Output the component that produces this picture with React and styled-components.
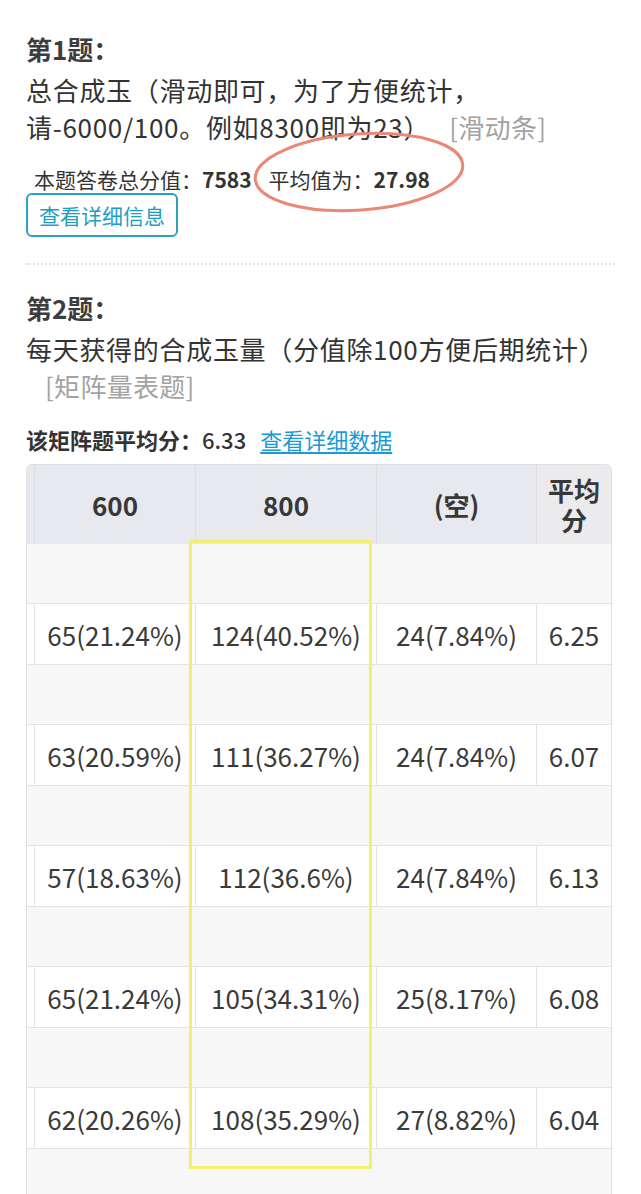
import React from "react";
import styled, { createGlobalStyle } from "styled-components";

const GlobalStyle = createGlobalStyle`
  html, body {
    margin: 0;
    padding: 0;
    background: #fff;
  }
  body {
    font-family: "Noto Sans CJK SC", "Noto Sans", sans-serif;
    color: #333;
  }
`;

const Page = styled.div`
  position: relative;
  box-sizing: border-box;
  width: 641px;
  height: 1194px;
  overflow: hidden;
  padding: 30px 26px 0 26px;
`;

const Question = styled.section`
  padding-bottom: ${p => (p.$last ? 0 : 26)}px;
  margin-bottom: ${p => (p.$last ? 0 : 24)}px;
  border-bottom: ${p => (p.$last ? "none" : "2px dotted #e4e4e4")};
`;

const QTitle = styled.div`
  font-size: 26px;
  line-height: 37px;
  font-weight: 700;
  color: #3d3d3d;
  margin-bottom: 4px;
`;

const QText = styled.div`
  font-size: 26px;
  line-height: 37px;
  letter-spacing: 0.7px;
  color: #333;
`;

const TypeTag = styled.span`
  color: #a3a3a3;
  margin-left: 19px;
  letter-spacing: 0.3px;
`;

const Stats = styled.div`
  margin-top: 20px;
  padding-left: 8px;
  font-size: 21px;
  line-height: 28px;
  color: #333;
`;

const StatValue = styled.b`
  font-weight: 700;
  margin-right: 17px;
`;

const DetailButton = styled.button`
  display: block;
  margin-top: 0;
  box-sizing: border-box;
  height: 44px;
  padding: 0 11px;
  border: 2px solid #2aa3c2;
  border-radius: 6px;
  background: #fff;
  color: #1e9ec1;
  font-family: inherit;
  font-size: 21px;
  line-height: 40px;
`;

const MatrixSummary = styled.div`
  margin-top: 20px;
  font-size: 22px;
  line-height: 30px;
  font-weight: 700;
  color: #333;
`;

const SummaryValue = styled.span`
  font-weight: 500;
  margin-right: 14px;
`;

const DetailLink = styled.a`
  font-weight: 400;
  color: #1b9ad6;
  text-decoration: underline;
  text-underline-offset: 3px;
`;

const Table = styled.div`
  margin-top: 10px;
  width: 586px;
  box-sizing: border-box;
  border: 1px solid #e0e0e0;
  border-bottom: none;
  border-radius: 6px 6px 0 0;
  overflow: hidden;
`;

const columns = "7px 161px 181px 160px 1fr";

const HeadRow = styled.div`
  display: grid;
  grid-template-columns: ${columns};
  height: 79px;
  background: #e7e9ef;
`;

const HeadCell = styled.div`
  display: flex;
  align-items: center;
  justify-content: center;
  text-align: center;
  border-left: ${p => (p.$first ? "none" : "1px solid #dcdee4")};
  background: ${p => (p.$plain ? "#ebebed" : "transparent")};
  padding: 0 ${p => (p.$narrow ? 11 : 0)}px;
  font-size: 26px;
  line-height: 30px;
  font-weight: 700;
  color: #383838;
`;

const BlankRow = styled.div`
  height: 60px;
  box-sizing: border-box;
  background: #f7f7f7;
  border-bottom: 1px solid #e3e3e3;
`;

const DataRow = styled.div`
  display: grid;
  grid-template-columns: ${columns};
  height: 61px;
  box-sizing: border-box;
  background: #fff;
  border-bottom: 1px solid #e3e3e3;
`;

const Cell = styled.div`
  display: flex;
  align-items: center;
  justify-content: center;
  border-left: ${p => (p.$first ? "none" : "1px solid #e3e3e3")};
  font-size: 26px;
  color: #3a3a3a;
  white-space: nowrap;
`;

const YellowBox = styled.div`
  position: absolute;
  left: 189px;
  top: 540px;
  width: 183px;
  height: 629px;
  box-sizing: border-box;
  border: 3px solid #f3ef72;
  pointer-events: none;
`;

const CircleMark = styled.svg`
  position: absolute;
  left: 245px;
  top: 126px;
  pointer-events: none;
`;

const rows = [
  ["65(21.24%)", "124(40.52%)", "24(7.84%)", "6.25"],
  ["63(20.59%)", "111(36.27%)", "24(7.84%)", "6.07"],
  ["57(18.63%)", "112(36.6%)", "24(7.84%)", "6.13"],
  ["65(21.24%)", "105(34.31%)", "25(8.17%)", "6.08"],
  ["62(20.26%)", "108(35.29%)", "27(8.82%)", "6.04"],
];

export default function App() {
  return (
    <Page>
      <GlobalStyle />
      <Question>
        <QTitle>第1题：</QTitle>
        <QText>
          总合成玉（滑动即可，为了方便统计，请-6000/100。例如8300即为23）
          <TypeTag>[滑动条]</TypeTag>
        </QText>
        <Stats>
          本题答卷总分值：<StatValue>7583</StatValue>平均值为：<StatValue>27.98</StatValue>
        </Stats>
        <DetailButton>查看详细信息</DetailButton>
      </Question>

      <Question $last>
        <QTitle>第2题：</QTitle>
        <QText>
          每天获得的合成玉量（分值除100方便后期统计）
          <TypeTag>[矩阵量表题]</TypeTag>
        </QText>
        <MatrixSummary>
          该矩阵题平均分：<SummaryValue>6.33</SummaryValue>
          <DetailLink>查看详细数据</DetailLink>
        </MatrixSummary>

        <Table>
          <HeadRow>
            <HeadCell $first />
            <HeadCell>600</HeadCell>
            <HeadCell>800</HeadCell>
            <HeadCell>(空)</HeadCell>
            <HeadCell $plain $narrow>平均分</HeadCell>
          </HeadRow>
          {rows.map((r, i) => (
            <React.Fragment key={i}>
              <BlankRow />
              <DataRow>
                <Cell $first />
                {r.map((v, j) => (
                  <Cell key={j}>{v}</Cell>
                ))}
              </DataRow>
            </React.Fragment>
          ))}
          <BlankRow />
        </Table>
      </Question>

      <YellowBox />
      <CircleMark width="230" height="95" viewBox="0 0 230 95">
        <ellipse
          cx="114"
          cy="46"
          rx="104"
          ry="38"
          fill="none"
          stroke="#ea8877"
          strokeWidth="3"
          transform="rotate(-4 114 46)"
        />
      </CircleMark>
    </Page>
  );
}
